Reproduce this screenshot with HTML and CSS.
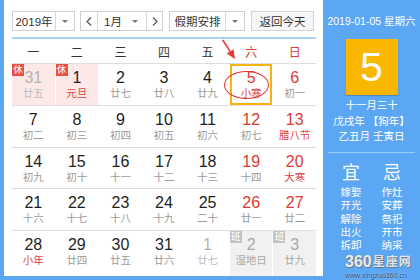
FILE: index.html
```html
<!DOCTYPE html>
<html lang="zh">
<head>
<meta charset="utf-8">
<title>万年历</title>
<link rel="stylesheet" href="styles.css">
</head>
<body>
<div class="app">
  <div class="main">
    <div class="toolbar">
      <div class="sel sel-year"><span class="sel-text">2019年</span><span class="sel-arrow"><i class="tri"></i></span></div>
      <div class="sel sel-month">
        <span class="nav"><svg width="6" height="9" viewBox="0 0 6 9"><polyline points="5,0.5 1,4.5 5,8.5" fill="none" stroke="#555" stroke-width="1.2"/></svg></span>
        <span class="sel-text month-text">1月</span><span class="caret"><i class="tri"></i></span>
        <span class="nav nav-r"><svg width="6" height="9" viewBox="0 0 6 9"><polyline points="1,0.5 5,4.5 1,8.5" fill="none" stroke="#555" stroke-width="1.2"/></svg></span>
      </div>
      <div class="sel sel-hol"><span class="sel-text">假期安排</span><span class="sel-arrow"><i class="tri"></i></span></div>
      <div class="btn-today">返回今天</div>
    </div>
    <div class="blue-line"></div>
    <div class="weekhead">
      <span>一</span><span>二</span><span>三</span><span>四</span><span>五</span><span class="red">六</span><span class="red">日</span>
    </div>
    <div class="grid">
      <div class="week">
        <div class="cell holiday muted"><span class="badge rest">休</span><b class="num">31</b><span class="lunar">廿五</span></div>
        <div class="cell holiday"><span class="badge rest">休</span><b class="num">1</b><span class="lunar fest">元旦</span></div>
        <div class="cell"><b class="num">2</b><span class="lunar">廿七</span></div>
        <div class="cell"><b class="num">3</b><span class="lunar">廿八</span></div>
        <div class="cell"><b class="num">4</b><span class="lunar">廿九</span></div>
        <div class="cell we selected"><span class="ring"></span><b class="num">5</b><span class="lunar fest">小寒</span></div>
        <div class="cell we"><b class="num">6</b><span class="lunar">初一</span></div>
      </div>
      <div class="week">
        <div class="cell"><b class="num">7</b><span class="lunar">初二</span></div>
        <div class="cell"><b class="num">8</b><span class="lunar">初三</span></div>
        <div class="cell"><b class="num">9</b><span class="lunar">初四</span></div>
        <div class="cell"><b class="num">10</b><span class="lunar">初五</span></div>
        <div class="cell"><b class="num">11</b><span class="lunar">初六</span></div>
        <div class="cell we"><b class="num">12</b><span class="lunar">初七</span></div>
        <div class="cell we"><b class="num">13</b><span class="lunar fest">腊八节</span></div>
      </div>
      <div class="week">
        <div class="cell"><b class="num">14</b><span class="lunar">初九</span></div>
        <div class="cell"><b class="num">15</b><span class="lunar">初十</span></div>
        <div class="cell"><b class="num">16</b><span class="lunar">十一</span></div>
        <div class="cell"><b class="num">17</b><span class="lunar">十二</span></div>
        <div class="cell"><b class="num">18</b><span class="lunar">十三</span></div>
        <div class="cell we"><b class="num">19</b><span class="lunar">十四</span></div>
        <div class="cell we"><b class="num">20</b><span class="lunar fest">大寒</span></div>
      </div>
      <div class="week">
        <div class="cell"><b class="num">21</b><span class="lunar">十六</span></div>
        <div class="cell"><b class="num">22</b><span class="lunar">十七</span></div>
        <div class="cell"><b class="num">23</b><span class="lunar">十八</span></div>
        <div class="cell"><b class="num">24</b><span class="lunar">十九</span></div>
        <div class="cell"><b class="num">25</b><span class="lunar">二十</span></div>
        <div class="cell we"><b class="num">26</b><span class="lunar">廿一</span></div>
        <div class="cell we"><b class="num">27</b><span class="lunar">廿二</span></div>
      </div>
      <div class="week last">
        <div class="cell"><b class="num">28</b><span class="lunar fest">小年</span></div>
        <div class="cell"><b class="num">29</b><span class="lunar">廿四</span></div>
        <div class="cell"><b class="num">30</b><span class="lunar">廿五</span></div>
        <div class="cell"><b class="num">31</b><span class="lunar">廿六</span></div>
        <div class="cell muted"><b class="num">1</b><span class="lunar">廿七</span></div>
        <div class="cell muted work"><span class="badge duty">班</span><b class="num">2</b><span class="lunar">湿地日</span></div>
        <div class="cell muted work"><span class="badge duty">班</span><b class="num">3</b><span class="lunar">廿九</span></div>
      </div>
    </div>
    <svg class="pointer" width="24" height="28" viewBox="0 0 24 28">
      <line x1="4.7" y1="4" x2="12.3" y2="15.6" stroke="#e53a2f" stroke-width="1.6"/>
      <polygon points="17,23 8.75,17.6 15.5,13.2" fill="#e53a2f"/>
    </svg>
  </div>
  <div class="side">
    <div class="date">2019-01-05 星期六</div>
    <div class="daybox">5</div>
    <div class="lunar-info">
      <div>十一月三十</div>
      <div>戊戌年 【狗年】</div>
      <div>乙丑月 壬寅日</div>
    </div>
    <div class="divider"></div>
    <div class="yiji">
      <div class="yj-col">
        <div class="yj-head">宜</div>
        <ul class="yj-list"><li>嫁娶</li><li>开光</li><li>解除</li><li>出火</li><li>拆卸</li></ul>
      </div>
      <div class="yj-col">
        <div class="yj-head">忌</div>
        <ul class="yj-list"><li>作灶</li><li>安葬</li><li>祭祀</li><li>开市</li><li>纳采</li></ul>
      </div>
    </div>
    <div class="wm">
      <div class="wm-logo"><span class="wm-num">360</span><span class="wm-cn">星座网</span></div>
      <div class="wm-url">www.xingzuo360.cn</div>
    </div>
  </div>
</div>
</body>
</html>
```

FILE: styles.css
```css
* { box-sizing: border-box; }
html, body { margin: 0; padding: 0; }
body {
  width: 420px;
  height: 280px;
  overflow: hidden;
  background: #5ca7f4;
  font-family: "Liberation Sans", "Noto Sans CJK SC", sans-serif;
}
.app {
  display: flex;
  height: 280px;
  padding: 0 0 4px 4px;
}
.main {
  position: relative;
  width: 319px;
  background: #fff;
  padding: 11px 7px 0 8px;
  display: flex;
  flex-direction: column;
}

/* toolbar */
.toolbar {
  display: flex;
  height: 20px;
  font-size: 11.5px;
  color: #333;
}
.sel {
  display: flex;
  align-items: stretch;
  height: 20px;
  border: 1px solid #cfcfcf;
  background: #fff;
}
.sel-text {
  flex: 1;
  display: flex;
  align-items: center;
  justify-content: center;
}
.sel-arrow, .caret {
  display: flex;
  align-items: center;
  justify-content: center;
}
.sel-arrow {
  width: 19px;
  border-left: 1px solid #d8d8d8;
}
.caret { width: 22px; }
.tri {
  display: block;
  width: 0;
  height: 0;
  border-left: 3px solid transparent;
  border-right: 3px solid transparent;
  border-top: 3px solid #777;
}
.sel-year { width: 63px; margin-right: 5px; }
.sel-month { width: 83px; margin-right: 6px; }
.sel-hol { width: 76px; margin-right: 6px; }
.nav {
  width: 17px;
  display: flex;
  align-items: center;
  justify-content: center;
  border-right: 1px solid #d8d8d8;
}
.nav-r {
  width: 16px;
  border-right: 0;
  border-left: 1px solid #d8d8d8;
}
.month-text { justify-content: flex-end; padding-right: 2px; }
.btn-today {
  width: 63px;
  height: 20px;
  border: 1px solid #d4d4d4;
  background: #f6f6f6;
  display: flex;
  align-items: center;
  justify-content: center;
}

.blue-line {
  margin-top: 6px;
  height: 2px;
  background: #a9d1f6;
}
.weekhead {
  height: 24px;
  display: grid;
  grid-template-columns: repeat(7, 1fr);
  column-gap: 1px;
  align-items: center;
  text-align: center;
  font-size: 12px;
  color: #333;
}
.weekhead .red { color: #d8413a; }

/* grid */
.grid {
  flex: 1;
  display: flex;
  flex-direction: column;
  border-top: 1px solid #dedede;
}
.week {
  height: 41.75px;
  display: grid;
  grid-template-columns: repeat(7, 1fr);
  column-gap: 1px;
  border-bottom: 1px solid #dedede;
}
.week.last {
  flex: 1;
  border-bottom: 0;
}
.cell {
  position: relative;
  display: flex;
  flex-direction: column;
  align-items: center;
  padding-top: 5px;
}
.num {
  font-weight: normal;
  font-size: 16px;
  line-height: 17px;
  color: #1e1e1e;
}
.lunar {
  font-size: 10.5px;
  line-height: 14px;
  color: #9a9a9a;
}
.lunar.fest { color: #e0413a; }
.we .num { color: #dc3a32; }
.muted .num { color: #b4b4b4; }
.muted .lunar { color: #bdbdbd; }
.holiday { background: #fde8e8; }
.work { background: #f1f1f1; }
.muted.work .num, .muted.work .lunar { color: #a8a8a8; }
.badge {
  position: absolute;
  left: 0;
  top: 0;
  width: 12px;
  height: 12px;
  font-size: 9.5px;
  line-height: 12px;
  text-align: center;
  color: #fff;
}
.badge.rest { background: #e6513f; }
.badge.duty { background: #c2c2c2; }
.selected { box-shadow: inset 0 0 0 2px #f6b50e; }
.ring {
  position: absolute;
  left: -6px;
  top: 7px;
  width: 45px;
  height: 28px;
  border: 1.6px solid #e2332b;
  border-radius: 50%;
}
.pointer {
  position: absolute;
  left: 214px;
  top: 36px;
}

/* side */
.side {
  position: relative;
  flex: 1;
  display: flex;
  flex-direction: column;
  align-items: center;
  color: #fff;
  padding-top: 14px;
}
.date {
  font-size: 10.5px;
  line-height: 14px;
}
.daybox {
  margin-top: 11px;
  width: 52px;
  height: 56px;
  background: #f9b700;
  box-shadow: 0 1px 1px rgba(0, 0, 0, 0.18);
  font-size: 41px;
  line-height: 56px;
  text-align: center;
  color: #fff;
}
.lunar-info {
  margin-top: 3px;
  font-size: 10.5px;
  line-height: 15.5px;
  text-align: center;
}
.divider {
  margin-top: 7.5px;
  width: 87px;
  height: 1px;
  background: rgba(255, 255, 255, 0.4);
}
.yiji {
  display: flex;
  gap: 7px;
  margin-top: 10px;
}
.yj-col {
  width: 34px;
  text-align: center;
}
.yj-head {
  font-size: 18px;
  line-height: 20px;
}
.yj-list {
  list-style: none;
  margin: 3px 0 0;
  padding: 0;
  font-size: 10.5px;
  line-height: 13.3px;
}
.wm {
  position: absolute;
  right: 3px;
  bottom: -4px;
  width: 72px;
}
.wm-logo {
  display: flex;
  align-items: center;
  height: 18.5px;
}
.wm-num {
  font-size: 16px;
  font-weight: bold;
  line-height: 18.5px;
  color: #e6ebf0;
  text-shadow: 1px 1px 0 #6b7480, -1px 0 0 #8a939c;
}
.wm-cn {
  margin-left: 1px;
  font-size: 12px;
  line-height: 18.5px;
  font-weight: bold;
  letter-spacing: 1px;
  color: #dfe5ea;
  text-shadow: 1px 1px 0 #6b7480;
}
.wm-url {
  font-size: 7px;
  line-height: 8.5px;
  color: #2d4d70;
  text-shadow: 0 0 2px rgba(255, 255, 255, 0.7);
}
```
